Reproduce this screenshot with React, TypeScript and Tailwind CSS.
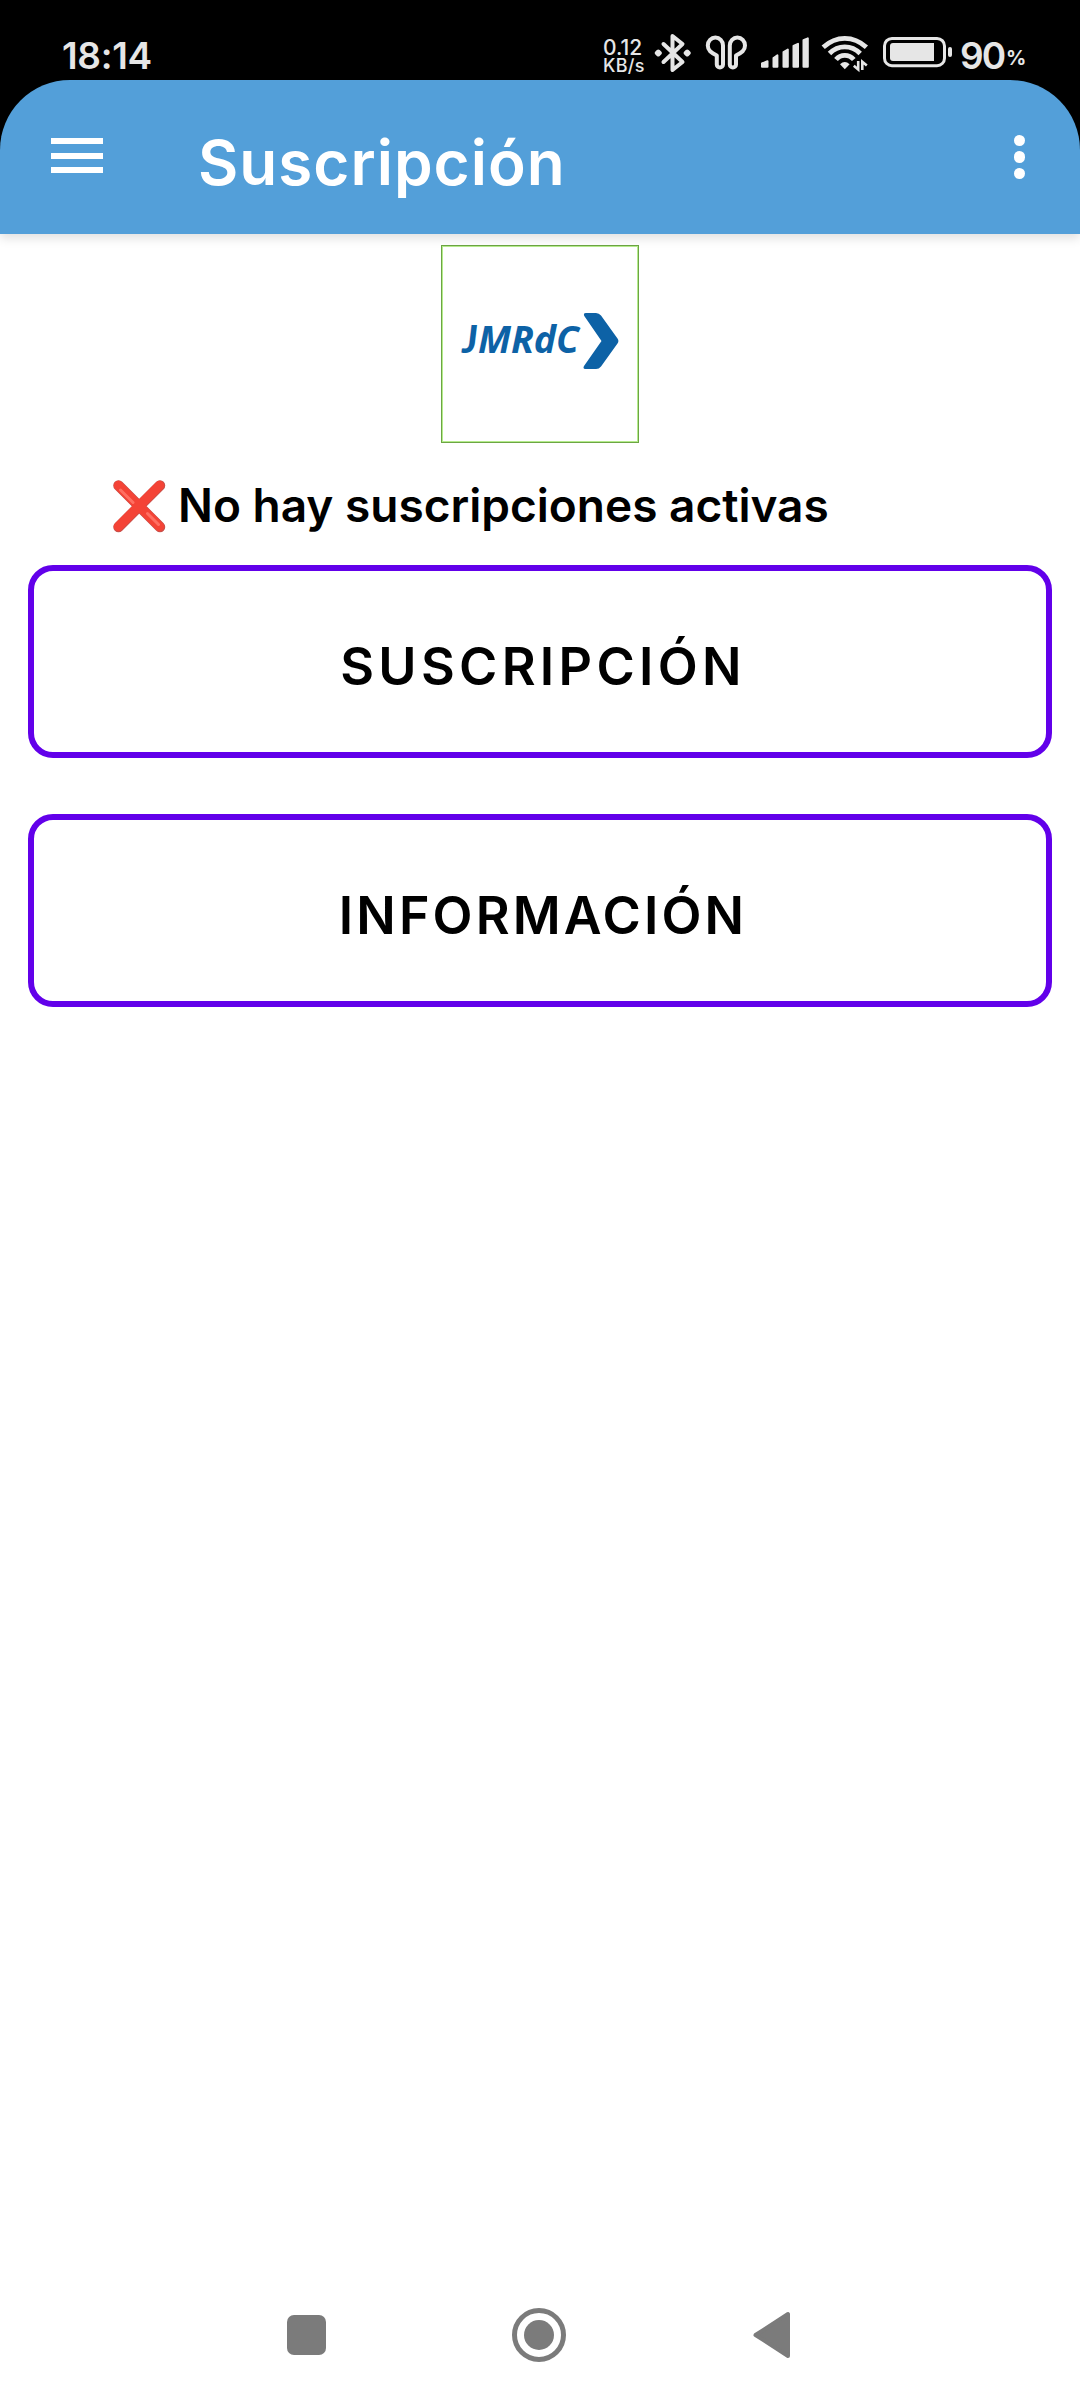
import { clsx } from "clsx";

const actions = [
    { name: "SUSCRIPCIÓN", tracking: "tracking-[4.3px]" },
    { name: "INFORMACIÓN", tracking: "tracking-[3.1px]" },
];

function BluetoothIcon() {
    return (
        <svg viewBox="654 30 38 44" className="h-11 w-[38px]" fill="none" stroke="#e6e6e6" strokeWidth="4" strokeLinecap="round" strokeLinejoin="round">
            <path d="M663.5 43 682.5 61 672.5 69V35L682.5 43 663.5 61" />
            <path d="M658.3 50.5 659.8 52 658.3 53.5 656.8 52ZM687.2 50.5 688.7 52 687.2 53.5 685.7 52Z" fill="#e6e6e6" />
        </svg>
    );
}

function EarbudsIcon() {
    return (
        <svg viewBox="704 33 46 40" className="h-10 w-[46px]" fill="none" stroke="#e6e6e6" strokeWidth="4" strokeLinejoin="round">
            <path d="M716.8 55.5V64.5a3.1 3.1 0 0 0 6.2 0V45.5a7.6 7.9 0 0 0-15.2 0C707.8 50.5 711 52.5 716.8 55.5Z" />
            <path d="M736 55.5V64.5a3.1 3.1 0 0 1-6.2 0V45.5a7.6 7.9 0 0 1 15.2 0C745 50.5 741.8 52.5 736 55.5Z" />
        </svg>
    );
}

function SignalIcon() {
    return (
        <svg viewBox="760 33 50 40" className="h-10 w-[50px]" fill="#e6e6e6" stroke="#e6e6e6" strokeWidth="2" strokeLinejoin="round">
            <path d="M762 63.5 767.5 61.2V66.8H762ZM773.5 58 777.4 55.4V66.8H773.5ZM783.5 52 787.8 49.5V66.8H783.5ZM793.5 46 798 43.8V66.8H793.5ZM803.5 40.2 807.8 38.3V66.8H803.5Z" />
        </svg>
    );
}

function WifiIcon() {
    return (
        <svg viewBox="820 33 50 40" className="h-10 w-[50px]" fill="none" stroke="#e6e6e6">
            <path d="M823.2 47.2Q833 38.3 844.8 38.3T866.4 47.2" strokeWidth="4.8" />
            <path d="M829.5 53.5Q836 46.8 844.8 46.8T860.2 53.5" strokeWidth="4.8" />
            <path d="M836 59.5Q839.5 55.3 844.8 55.3T853.8 59.5" strokeWidth="4.8" />
            <path d="M840 64.2Q844.8 60 849.6 64.2L844.8 69.3Z" fill="#e6e6e6" stroke="none" />
            <path d="M858.2 61V69.5L853.8 65.8M862.3 70V61.8L866.8 65.6" strokeWidth="2.6" />
        </svg>
    );
}

function BatteryIcon() {
    return (
        <svg viewBox="882 33 72 40" className="h-10 w-[72px]" fill="#e6e6e6">
            <rect x="884.5" y="38.4" width="60" height="27.3" rx="7.5" fill="none" stroke="#e6e6e6" strokeWidth="3" />
            <path d="M893 43H934V61H893Q890 61 890 58V46Q890 43 893 43Z" />
            <rect x="948" y="47" width="4" height="10" rx="2" />
        </svg>
    );
}

function StatusBar() {
    return (
        <div className="flex h-20 items-center pt-[25px] pl-[62px] text-[#e6e6e6]">
            <span className="mt-[6px] text-[37px] leading-none font-semibold tracking-[-0.3px]">18:14</span>
            <div className="mr-[56px] ml-auto flex items-center">
                <div className="mt-[7px] w-[51px] font-medium">
                    <div className="text-[21px] leading-[18px]">0.12</div>
                    <div className="text-[18px] leading-[17px] tracking-[0.3px]">KB/s</div>
                </div>
                <BluetoothIcon />
                <span className="w-3" />
                <EarbudsIcon />
                <span className="w-[10px]" />
                <SignalIcon />
                <span className="w-[10px]" />
                <WifiIcon />
                <span className="w-3" />
                <BatteryIcon />
                <span className="mt-[6px] ml-[6px] w-[46px] text-[37px] leading-none font-semibold tracking-[-2px]">90</span>
                <span className="mt-[10px] w-[18px] text-[20px] leading-none font-bold">%</span>
            </div>
        </div>
    );
}

function AppBar() {
    return (
        <header className="relative bg-white shadow-[0_4px_10px_rgba(0,0,0,0.13)]">
            <div className="bg-black">
                <div className="flex h-[154px] items-center rounded-t-[70px] bg-[#539fd9] pr-[55px] pl-[51px]">
                    <button className="-mt-[3px] flex w-[52px] flex-col gap-[8.5px]" aria-label="Menú">
                        <span className="h-[6px] bg-white" />
                        <span className="h-[6px] bg-white" />
                        <span className="h-[6px] bg-white" />
                    </button>
                    <h1 className="mt-[11px] ml-[95px] text-[62px] leading-none font-semibold tracking-[1px] text-white">Suscripción</h1>
                    <button className="ml-auto flex flex-col gap-[5px]" aria-label="Más opciones">
                        <span className="size-[11.5px] rounded-full bg-white" />
                        <span className="size-[11.5px] rounded-full bg-white" />
                        <span className="size-[11.5px] rounded-full bg-white" />
                    </button>
                </div>
            </div>
        </header>
    );
}

function Logo() {
    return (
        <div className="flex size-[198px] items-start border border-[#6da544] bg-white pt-[66px] pl-[20px] text-[#0d62a6] shadow-[inset_0_0_0_1px_#b5ec8c]">
            <div className="-mt-px flex w-[121px] text-[37.5px] leading-[56px] font-bold italic">
                <span className="w-[16px] font-['Lato',sans-serif] font-black">J</span>
                <span className="font-['Open_Sans',sans-serif]">MRdC</span>
            </div>
            <svg viewBox="583 312 36 58" className="h-[58px] w-9" fill="currentColor">
                <path d="M586 313H596Q599 313 601 315.500L617.500 338.500Q619.300 341 617.500 343.500L601 366.500Q599 369 596 369H585.500Q582.500 369 584 366L601.500 341 584.300 316Q583 313 586 313Z" />
            </svg>
        </div>
    );
}

function CrossMark() {
    return (
        <svg viewBox="113 479 53 54" className="h-[54px] w-[53px]" fill="none" strokeLinecap="round">
            <path d="M118.500 485.500 160 527M160 485.500 118.500 527" stroke="#c9504a" strokeWidth="10.500" />
            <path d="M118.500 485.500 159.500 526.500M159.500 485.500 118.500 526.500" stroke="#f44336" strokeWidth="9.500" />
            <path d="M120.500 490 133 502.500M147.500 513.500 158.500 524.500" stroke="#ff6f62" strokeWidth="3" />
        </svg>
    );
}

function NavBar() {
    return (
        <nav className="mt-auto flex h-[130px] items-center pl-[287px]">
            <span className="h-10 w-[39px] rounded-[7px] bg-[#7b7b7b]" />
            <span className="ml-[186px] flex size-[54px] items-center justify-center rounded-full border-[5px] border-[#7b7b7b]">
                <span className="size-[30px] rounded-full bg-[#7b7b7b]" />
            </span>
            <svg viewBox="753 2311 38 48" className="ml-[187px] h-12 w-[38px]">
                <path d="M788 2314V2356L755.500 2335Z" fill="#7b7b7b" stroke="#7b7b7b" strokeWidth="4" strokeLinejoin="round" />
            </svg>
        </nav>
    );
}

export default function App() {
    return (
        <div className="flex h-[2400px] w-[1080px] flex-col bg-white font-['Inter',sans-serif]">
            <div className="bg-black">
                <StatusBar />
            </div>
            <AppBar />
            <main className="flex flex-col items-center px-7 pt-[11px]">
                <Logo />
                <div className="flex h-[122px] w-full items-center pt-[3px] pl-[85px] text-[46px] font-semibold text-black">
                    <CrossMark />
                    <span className="-mt-[2px] ml-3 leading-none whitespace-nowrap">No hay suscripciones activas</span>
                </div>
                <div className="flex w-full flex-col gap-14">
                    {actions.map((action) => (
                        <button
                            key={action.name}
                            className={clsx(
                                "flex h-[193px] items-center justify-center rounded-[25px] border-[6px] border-[#6200ea] pt-[11px] pl-[6px] text-[52px] leading-none font-semibold text-black",
                                action.tracking
                            )}
                        >
                            {action.name}
                        </button>
                    ))}
                </div>
            </main>
            <NavBar />
        </div>
    );
}
